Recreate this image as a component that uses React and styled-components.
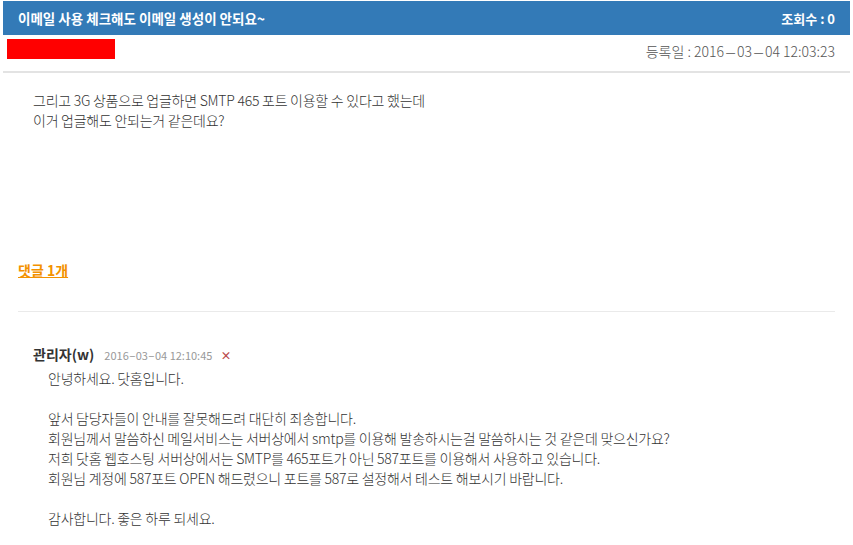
import React from "react";
import styled, { createGlobalStyle } from "styled-components";

const Global = createGlobalStyle`
  html, body { margin: 0; padding: 0; background: #fff; }
  body { font-family: "Noto Sans CJK KR", "Noto Sans", sans-serif; color: #333; }
`;

const Page = styled.div`
  padding: 1px 3px 0 3px;
`;

const TitleBar = styled.div`
  height: 34px;
  background: #337ab7;
  color: #fff;
  display: flex;
  align-items: center;
  justify-content: space-between;
  padding: 0 15px;
  font-size: 13.5px;
  font-weight: 700;
`;

const Views = styled.span`
  font-size: 13px;
`;

const MetaRow = styled.div`
  display: flex;
  justify-content: space-between;
  align-items: flex-start;
  padding: 4px 15px 0 4px;
  height: 32px;
  border-bottom: 2px solid #e3e3e3;
`;

const Masked = styled.div`
  width: 108px;
  height: 20px;
  background: #ff0000;
`;

const RegDate = styled.div`
  font-size: 14px;
  font-weight: 300;
  color: #555;
  line-height: 20px;
  margin-top: 2px;
`;

const DashGlyph = styled.span`
  display: inline-block;
  width: ${(p) => p.$w}px;
  text-align: center;
  transform: scaleX(${(p) => p.$s});
`;

const Body = styled.div`
  padding: 17px 30px 0;
  font-size: 14px;
  font-weight: 300;
  letter-spacing: -0.25px;
  line-height: 20px;
  color: #333;
  height: 167px;
`;

const CommentCount = styled.a`
  display: inline-block;
  margin-left: 15px;
  font-size: 14px;
  font-weight: 700;
  color: #f39200;
  text-decoration: underline;
  line-height: 20px;
`;

const Divider = styled.hr`
  margin: 30px 15px 0 15px;
  border: 0;
  border-top: 1px solid #eaeaea;
`;

const Comment = styled.div`
  padding: 30px 30px 0;
`;

const CommentHead = styled.div`
  display: flex;
  align-items: baseline;
  gap: 10px;
  line-height: 24px;
`;

const Author = styled.span`
  font-size: 14px;
  font-weight: 700;
  color: #333;
`;

const CDate = styled.span`
  font-size: 11px;
  color: #999;
`;

const Del = styled.span`
  font-size: 11px;
  color: #b94a48;
  font-weight: 700;
  margin-left: -2px;
`;

const CommentBody = styled.div`
  margin-top: 1px;
  padding-left: 15px;
  font-size: 14px;
  font-weight: 300;
  letter-spacing: -0.25px;
  line-height: 20px;
  color: #333;
`;

function DateText({ text, w, s }) {
  const parts = text.split("-");
  return parts.map((p, i) => (
    <React.Fragment key={i}>
      {p}
      {i < parts.length - 1 && (
        <DashGlyph $w={w} $s={s}>
          -
        </DashGlyph>
      )}
    </React.Fragment>
  ));
}

const lines = [
  "안녕하세요. 닷홈입니다.",
  "",
  "앞서 담당자들이 안내를 잘못해드려 대단히 죄송합니다.",
  "회원님께서 말씀하신 메일서비스는 서버상에서 smtp를 이용해 발송하시는걸 말씀하시는 것 같은데 맞으신가요?",
  "저희 닷홈 웹호스팅 서버상에서는 SMTP를 465포트가 아닌 587포트를 이용해서 사용하고 있습니다.",
  "회원님 계정에 587포트 OPEN 해드렸으니 포트를 587로 설정해서 테스트 해보시기 바랍니다.",
  "",
  "감사합니다. 좋은 하루 되세요.",
];

export default function App() {
  return (
    <Page>
      <Global />
      <TitleBar>
        <span>이메일 사용 체크해도 이메일 생성이 안되요~</span>
        <Views>조회수 : 0</Views>
      </TitleBar>
      <MetaRow>
        <Masked />
        <RegDate>
          등록일 : <DateText text="2016-03-04" w={13} s={2.6} /> 12:03:23
        </RegDate>
      </MetaRow>
      <Body>
        그리고 3G 상품으로 업글하면 SMTP 465 포트 이용할 수 있다고 했는데
        <br />
        이거 업글해도 안되는거 같은데요?
      </Body>
      <CommentCount>댓글 1개</CommentCount>
      <Divider />
      <Comment>
        <CommentHead>
          <Author>관리자(w)</Author>
          <CDate>
            <DateText text="2016-03-04" w={7} s={1.8} /> 12:10:45
          </CDate>
          <Del>×</Del>
        </CommentHead>
        <CommentBody>
          {lines.map((l, i) => (
            <div key={i}>{l || "\u00a0"}</div>
          ))}
        </CommentBody>
      </Comment>
    </Page>
  );
}
